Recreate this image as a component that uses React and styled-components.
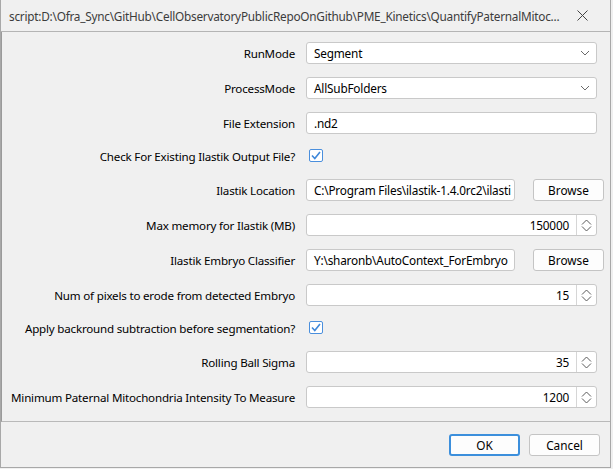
import React from 'react';
import styled, { createGlobalStyle } from 'styled-components';

const GlobalStyle = createGlobalStyle`
    html, body {
        margin: 0;
        padding: 0;
        background: #f0f0f0;
        font-family: "Noto Sans", "Open Sans", sans-serif;
    }
`

const Window = styled.div`
    width: 611px;
    height: 468px;
    box-sizing: border-box;
    border: 1px solid #a8a8a8;
    border-top: none;
    background: #f0f0f0;
    display: flex;
    flex-direction: column;
`

const TitleBar = styled.div`
    height: 31px;
    border-bottom: 1px solid #b4b4b4;
    display: flex;
    align-items: center;
    justify-content: space-between;
    padding: 0 22px 0 8px;
    font-size: 11.8px;
    letter-spacing: -0.24px;
    color: #3c3c3c;
`

const Panel = styled.div`
    flex: 1;
    border-left: 1px solid #9a9a9a;
    border-bottom: 1px solid #b9b9b9;
    padding: 10px 0 0 0;
    display: grid;
    grid-template-columns: 293px 298px;
    column-gap: 11px;
    row-gap: 13px;
    align-content: start;
`

const Label = styled.div`
    height: ${p => p.$h || 22}px;
    display: flex;
    align-items: center;
    justify-content: flex-end;
    font-size: 11.6px;
    letter-spacing: -0.2px;
    color: #000;
    white-space: nowrap;
`

const FieldCell = styled.div`
    height: ${p => p.$h || 22}px;
    display: flex;
    align-items: ${p => p.$top ? 'flex-start' : 'center'};
    gap: 18px;
`

const Box = styled.div`
    box-sizing: border-box;
    height: 22px;
    width: ${p => p.$w || 291}px;
    background: #fff;
    border: 1px solid #c9c9c9;
    border-radius: 3px;
    display: flex;
    align-items: center;
    font-size: 11.8px;
    letter-spacing: -0.2px;
    color: #000;
    overflow: hidden;
`

const BoxText = styled.span`
    flex: 1;
    min-width: 0;
    padding: 0 ${p => p.$right ? 7 : 2}px 0 7px;
    white-space: nowrap;
    overflow: hidden;
    text-align: ${p => p.$right ? 'right' : 'left'};
`

const Arrow = styled.span`
    width: 22px;
    display: flex;
    justify-content: center;
`

const SpinBtn = styled.span`
    width: 19px;
    height: 100%;
    border-left: 1px solid #d6d6d6;
    display: flex;
    align-items: center;
    justify-content: center;
`

const Button = styled.div`
    box-sizing: border-box;
    width: 71px;
    height: 22px;
    background: #fdfdfd;
    border: ${p => p.$primary ? '2px solid #3c8fdc' : '1px solid #c4c4c4'};
    border-radius: 3px;
    display: flex;
    align-items: center;
    justify-content: center;
    font-size: 11.8px;
    color: #000;
`

const Check = styled.div`
    box-sizing: border-box;
    width: 14px;
    height: 13px;
    margin: 2px 0 0 3px;
    border: 1px solid #4a8fdd;
    border-radius: 2px;
    background: #fff;
    display: flex;
    align-items: center;
    justify-content: center;
`

const Footer = styled.div`
    height: 45px;
    display: flex;
    justify-content: flex-end;
    align-items: flex-start;
    gap: 9px;
    padding: 12px 10px 0 0;
    box-sizing: border-box;
`

const Chevron = () => (
    <svg width="10" height="6" viewBox="0 0 10 6">
        <polyline points="1,1 5,5 9,1" fill="none" stroke="#6a6a6a" strokeWidth="1" />
    </svg>
)

const SpinIcon = () => (
    <svg width="11" height="13" viewBox="0 0 11 13">
        <polyline points="1,5.5 5.5,1 10,5.5" fill="none" stroke="#5a5a5a" strokeWidth="1" />
        <polyline points="1,7.5 5.5,12 10,7.5" fill="none" stroke="#5a5a5a" strokeWidth="1" />
    </svg>
)

const CloseIcon = () => (
    <svg width="11" height="11" viewBox="0 0 11 11">
        <path d="M0.5 0.5 L10.5 10.5 M10.5 0.5 L0.5 10.5" stroke="#444" strokeWidth="1" />
    </svg>
)

const CheckMark = () => (
    <svg width="10" height="9" viewBox="0 0 10 9">
        <polyline points="1,4.5 3.8,7.5 9,1" fill="none" stroke="#3f88da" strokeWidth="1.6" />
    </svg>
)

function Combo({ value }) {
    return <Box><BoxText>{value}</BoxText><Arrow><Chevron /></Arrow></Box>
}

function Spin({ value }) {
    return <Box><BoxText $right>{value}</BoxText><SpinBtn><SpinIcon /></SpinBtn></Box>
}

function Text({ value, w }) {
    return <Box $w={w}><BoxText>{value}</BoxText></Box>
}

export default function App() {
    const rows = [
        { label: 'RunMode', field: <Combo value="Segment" /> },
        { label: 'ProcessMode', field: <Combo value="AllSubFolders" /> },
        { label: 'File Extension', field: <Text value=".nd2" /> },
        { label: 'Check For Existing Ilastik Output File?', check: true },
        { label: 'Ilastik Location', field: <><Text w={209} value="C:\Program Files\ilastik-1.4.0rc2\ilasti" /><Button>Browse</Button></> },
        { label: 'Max memory for Ilastik (MB)', field: <Spin value="150000" /> },
        { label: 'Ilastik Embryo Classifier', field: <><Text w={209} value="Y:\sharonb\AutoContext_ForEmbryo" /><Button>Browse</Button></> },
        { label: 'Num of pixels to erode from detected Embryo', field: <Spin value="15" /> },
        { label: 'Apply backround subtraction before segmentation?', check: true },
        { label: 'Rolling Ball Sigma', field: <Spin value="35" /> },
        { label: 'Minimum Paternal Mitochondria Intensity To Measure', field: <Spin value="1200" /> },
    ]

    return <>
        <GlobalStyle />
        <Window>
            <TitleBar>
                <span>script:D:\Ofra_Sync\GitHub\CellObservatoryPublicRepoOnGithub\PME_Kinetics\QuantifyPaternalMitoc...</span>
                <CloseIcon />
            </TitleBar>
            <Panel>
                {rows.map((r) => (
                    <React.Fragment key={r.label}>
                        <Label $h={r.check ? 19 : 22}>{r.label}</Label>
                        {r.check
                            ? <FieldCell $h={19} $top><Check><CheckMark /></Check></FieldCell>
                            : <FieldCell>{r.field}</FieldCell>}
                    </React.Fragment>
                ))}
            </Panel>
            <Footer>
                <Button $primary>OK</Button>
                <Button>Cancel</Button>
            </Footer>
        </Window>
    </>
}
